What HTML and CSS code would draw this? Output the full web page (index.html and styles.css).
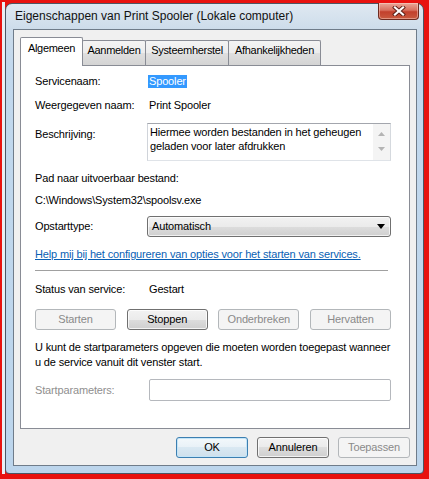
FILE: index.html
```html
<!DOCTYPE html>
<html lang="nl">
<head>
<meta charset="utf-8">
<title>Eigenschappen van Print Spooler</title>
<link rel="stylesheet" href="styles.css">
</head>
<body>
<div class="screen">
  <div class="desk"></div>
  <div class="window">
    <div class="titlebar">
      <span class="title">Eigenschappen van Print Spooler (Lokale computer)</span>
      <div class="close">
        <svg width="14" height="10" viewBox="0 0 14 10">
          <path d="M3 1.5 L11 8.5 M11 1.5 L3 8.5" stroke="#5a1f16" stroke-width="4" stroke-linecap="square" fill="none"/>
          <path d="M3 1.5 L11 8.5 M11 1.5 L3 8.5" stroke="#ffffff" stroke-width="2.2" stroke-linecap="square" fill="none"/>
        </svg>
      </div>
    </div>
    <div class="client">
      <div class="tabs">
        <div class="tab selected">Algemeen</div>
        <div class="tab w2">Aanmelden</div>
        <div class="tab w3">Systeemherstel</div>
        <div class="tab w4">Afhankelijkheden</div>
      </div>
      <div class="panel">
        <div class="row r1"><span class="lbl">Servicenaam:</span><span class="sel">Spooler</span></div>
        <div class="row r2"><span class="lbl">Weergegeven naam:</span><span>Print Spooler</span></div>
        <div class="row r3 top">
          <span class="lbl lbl-pad">Beschrijving:</span>
          <div class="textbox">
            <div class="tb-text">Hiermee worden bestanden in het geheugen<br>geladen voor later afdrukken</div>
            <div class="scroll">
              <svg width="7" height="4" viewBox="0 0 7 4"><path d="M0 4 L3.5 0 L7 4 Z" fill="#b4b4b4"/></svg>
              <svg width="7" height="4" viewBox="0 0 7 4"><path d="M0 0 L3.5 4 L7 0 Z" fill="#b4b4b4"/></svg>
            </div>
          </div>
        </div>
        <div class="row r4">Pad naar uitvoerbaar bestand:</div>
        <div class="row r5">C:\Windows\System32\spoolsv.exe</div>
        <div class="row r6">
          <span class="lbl">Opstarttype:</span>
          <div class="combo"><span>Automatisch</span>
            <svg width="8" height="5" viewBox="0 0 8 5"><path d="M0 0 L8 0 L4 5 Z" fill="#000"/></svg>
          </div>
        </div>
        <div class="row r7"><a class="link" href="#">Help mij bij het configureren van opties voor het starten van services.</a></div>
        <div class="sep"></div>
        <div class="row r8"><span class="lbl">Status van service:</span><span>Gestart</span></div>
        <div class="btnrow">
          <div class="btn disabled">Starten</div>
          <div class="btn">Stoppen</div>
          <div class="btn disabled">Onderbreken</div>
          <div class="btn disabled">Hervatten</div>
        </div>
        <div class="para">U kunt de startparameters opgeven die moeten worden toegepast wanneer<br>u de service vanuit dit venster start.</div>
        <div class="row r9"><span class="lbl dis">Startparameters:</span><div class="input"></div></div>
      </div>
      <div class="footer">
        <div class="btn fbtn default">OK</div>
        <div class="btn fbtn">Annuleren</div>
        <div class="btn fbtn disabled">Toepassen</div>
      </div>
    </div>
  </div>
</div>
</body>
</html>
```
FILE: styles.css
```css
html, body {
  margin: 0;
  padding: 0;
}
body {
  width: 429px;
  height: 479px;
  overflow: hidden;
  background: #e8120f;
  font-family: "Liberation Sans", Arial, sans-serif;
  color: #000;
}
.screen {
  display: flex;
  height: 479px;
  box-sizing: border-box;
  padding: 2px 5px 5px 2px;
}
.desk {
  width: 3px;
  background: #e9eef4;
}
.window {
  width: 419px;
  height: 471px;
  margin-top: 1px;
  box-sizing: border-box;
  border: 1px solid #4b5664;
  border-radius: 7px 7px 4px 4px;
  background: linear-gradient(#dfe8f1, #cbdbea 28px, #c2d8ed 60px, #bcd5ec);
  display: flex;
  flex-direction: column;
}
.titlebar {
  height: 25px;
  display: flex;
  align-items: flex-start;
  padding-left: 9px;
  flex: none;
}
.title {
  font-size: 12px;
  line-height: 25px;
  color: #111;
}
.close {
  margin-left: auto;
  margin-right: 4px;
  margin-top: -1px;
  width: 41px;
  height: 17px;
  box-sizing: border-box;
  border: 1px solid #6d2b20;
  border-top: none;
  border-radius: 0 0 4px 4px;
  background: linear-gradient(#e9a99a, #d7705e 45%, #c2402c 55%, #c95a3f);
  display: flex;
  align-items: center;
  justify-content: center;
  box-shadow: inset 0 0 0 1px rgba(255, 220, 210, 0.45);
}
.client {
  margin: 0 6px 7px 7px;
  height: 437px;
  box-sizing: border-box;
  border: 1px solid #6f7c8a;
  background: #f0f0f0;
  display: flex;
  flex-direction: column;
  padding: 0 6px 7px 6px;
}
.tabs {
  height: 36px;
  margin-bottom: -1px;
  display: flex;
  align-items: flex-end;
  position: relative;
  z-index: 1;
  flex: none;
}
.tab {
  height: 25px;
  margin-bottom: 1px;
  margin-left: -1px;
  box-sizing: border-box;
  border: 1px solid #898c95;
  border-bottom: none;
  border-radius: 2px 2px 0 0;
  background: linear-gradient(#f4f4f4, #ececec 50%, #dfdfdf 50%, #d4d4d4);
  font-size: 11px;
  letter-spacing: -0.3px;
  line-height: 15px;
  padding-top: 2px;
  text-align: center;
}
.tab.selected {
  width: 63px;
  height: 29px;
  margin-left: 0;
  margin-bottom: 0;
  padding-top: 3px;
  background: #fff;
  position: relative;
  z-index: 2;
}
.w2 { width: 64px; }
.w3 { width: 84px; }
.w4 { width: 93px; }
.panel {
  height: 364px;
  box-sizing: border-box;
  background: #fff;
  border: 1px solid #898c95;
  padding: 0 18px 0 14px;
  display: flex;
  flex-direction: column;
  flex: none;
}
.row {
  display: flex;
  align-items: center;
  font-size: 11px;
  line-height: 15px;
  letter-spacing: -0.15px;
  white-space: nowrap;
}
.row.top {
  align-items: flex-start;
}
.lbl {
  width: 114px;
  flex: none;
}
.lbl-pad {
  padding-top: 4px;
}
.dis {
  color: #8f8f8f;
}
.r1 { margin-top: 8px; }
.r2 { margin-top: 9px; }
.r3 { margin-top: 10px; }
.r4 { margin-top: 10px; }
.r5 { margin-top: 7px; }
.r6 { margin-top: 8px; }
.r7 { margin-top: 10px; }
.r8 { margin-top: 11px; }
.r9 { margin-top: 9px; }
.sel {
  display: inline-block;
  background: #3399ff;
  color: #fff;
  line-height: 13px;
  padding: 0 1px;
  margin-left: -1px;
}
.textbox {
  margin-left: -2px;
  width: 244px;
  height: 38px;
  box-sizing: border-box;
  border: 1px solid #abadb3;
  border-color: #a3a6ad #d5d9de #dfe3e8 #d0d4da;
  display: flex;
  background: #fff;
}
.tb-text {
  flex: 1;
  padding: 1px 2px;
  line-height: 14px;
}
.scroll {
  width: 17px;
  background: #f4f4f4;
  display: flex;
  flex-direction: column;
  align-items: center;
  justify-content: space-between;
  padding: 8px 0 9px;
  box-sizing: border-box;
}
.combo {
  margin-left: -2px;
  width: 244px;
  height: 21px;
  box-sizing: border-box;
  border: 1px solid #707070;
  border-radius: 3px;
  background: linear-gradient(#f2f2f2, #ebebeb 50%, #dddddd 50%, #cfcfcf);
  box-shadow: inset 0 0 0 1px rgba(255, 255, 255, 0.7);
  display: flex;
  align-items: center;
  justify-content: space-between;
  padding: 0 5px 0 4px;
}
.link {
  color: #0a5fb4;
  text-decoration: underline;
}
.sep {
  margin-top: 8px;
  width: 353px;
  height: 1px;
  background: #a0a0a0;
  flex: none;
}
.btnrow {
  margin-top: 12px;
  display: flex;
  justify-content: space-between;
}
.btn {
  width: 81px;
  height: 21px;
  box-sizing: border-box;
  border: 1px solid #707070;
  border-radius: 3px;
  background: linear-gradient(#f2f2f2, #ebebeb 50%, #dddddd 50%, #cfcfcf);
  box-shadow: inset 0 0 0 1px rgba(255, 255, 255, 0.75);
  font-size: 11px;
  letter-spacing: -0.15px;
  line-height: 19px;
  text-align: center;
  white-space: nowrap;
}
.btn.disabled {
  border-color: #b3b7ba;
  background: #f4f4f4;
  box-shadow: none;
  color: #8a8a8a;
}
.para {
  margin-top: 10px;
  font-size: 11px;
  line-height: 15px;
  letter-spacing: -0.15px;
  white-space: nowrap;
}
.input {
  width: 243px;
  height: 22px;
  box-sizing: border-box;
  border: 1px solid #b5b8bd;
  border-radius: 2px;
  background: #fff;
}
.footer {
  margin-top: 8px;
  display: flex;
  justify-content: flex-end;
  gap: 9px;
}
.fbtn {
  width: 72px;
}
.btn.default {
  border-color: #3c7fb1;
  background: linear-gradient(#f3f8fb, #e8f1f7 50%, #d9e8f2 50%, #cfe0ec);
  box-shadow: inset 0 0 0 1px #c4e5f8;
}
```
